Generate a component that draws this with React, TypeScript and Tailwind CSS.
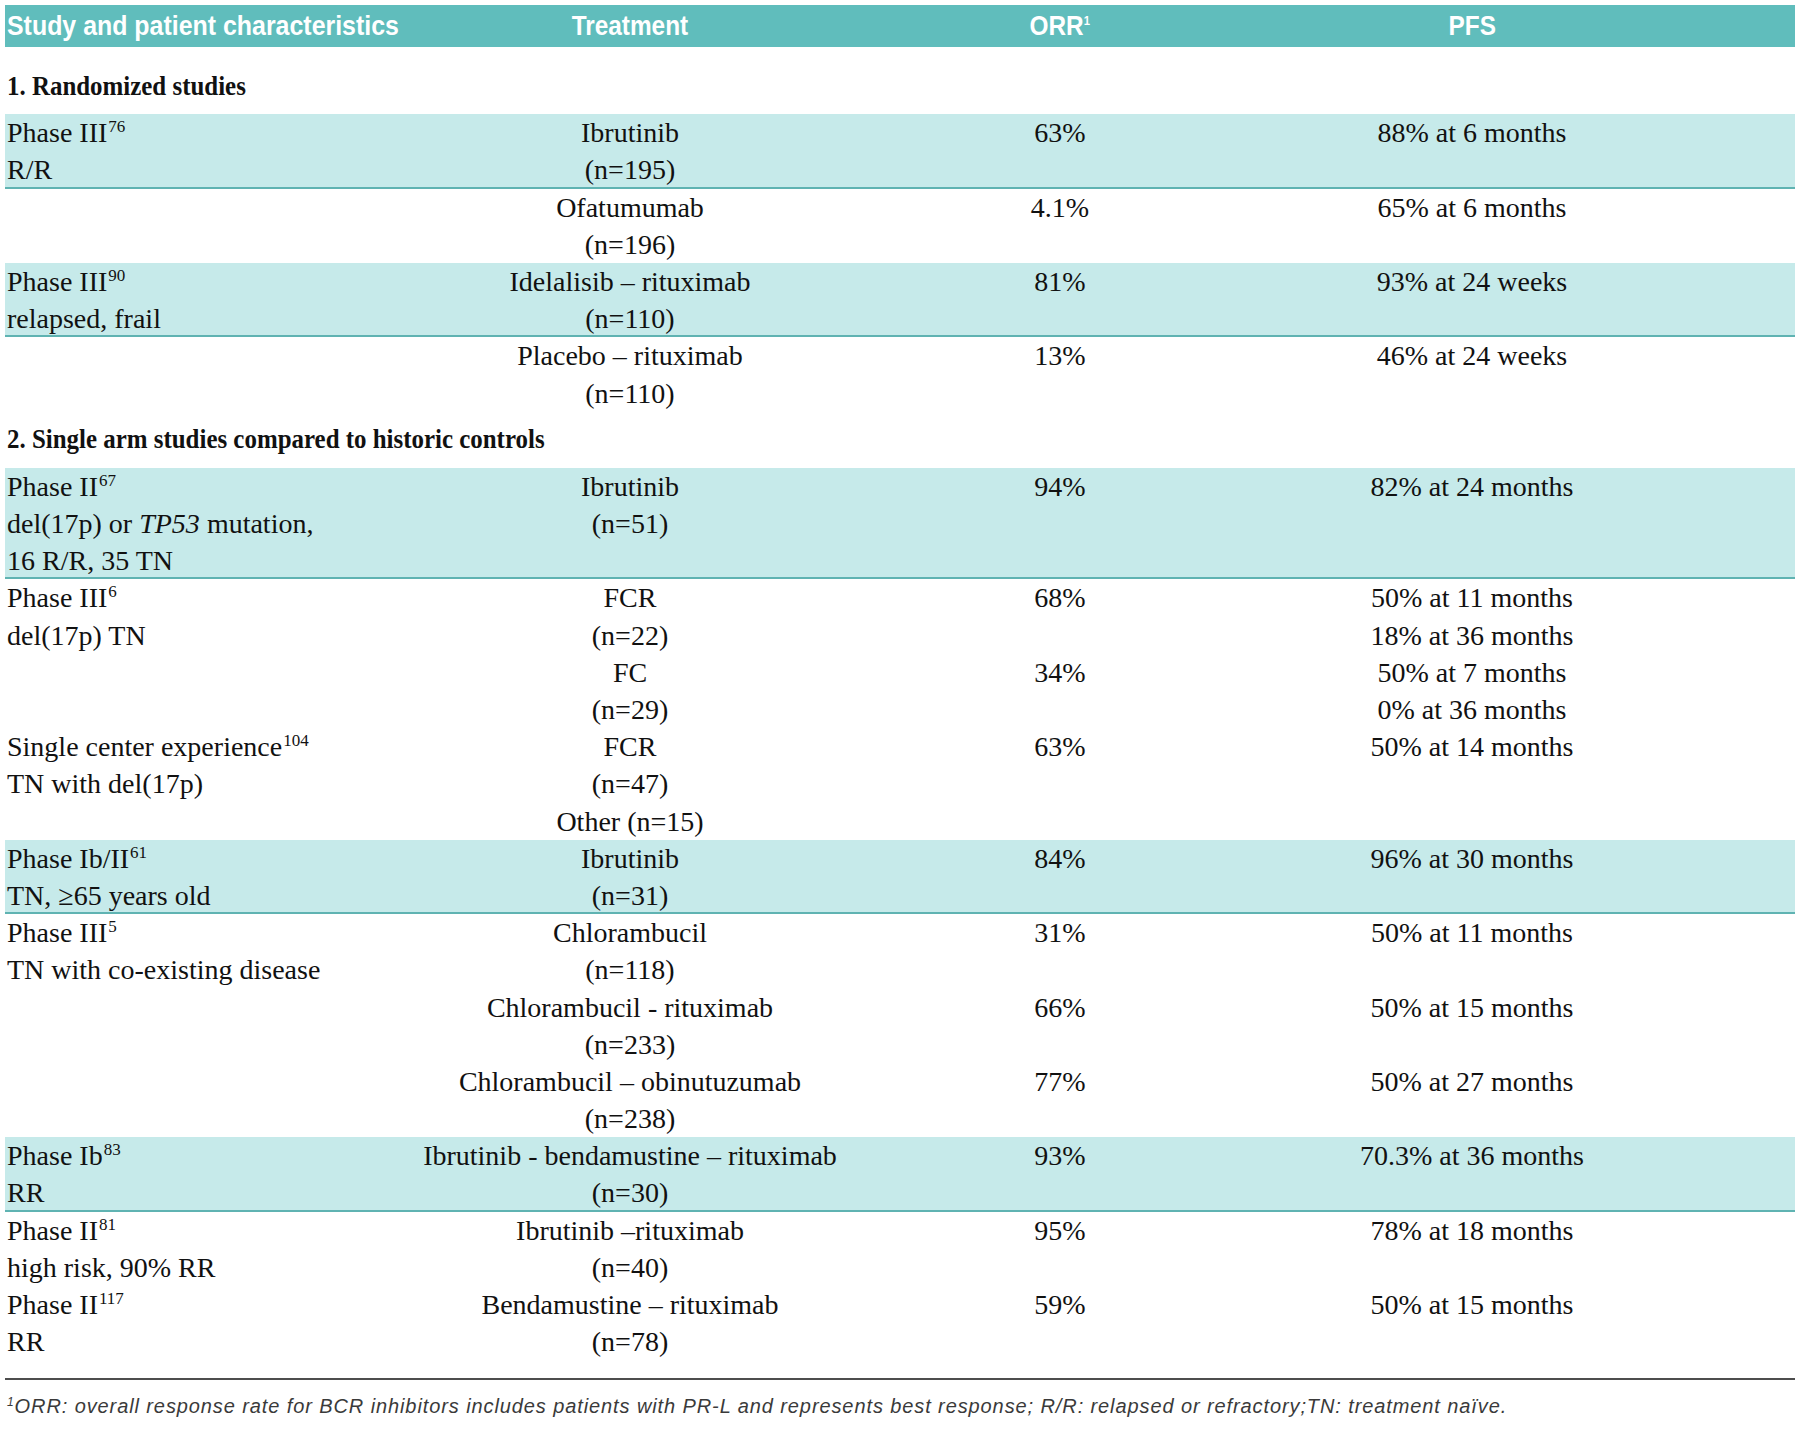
import React from 'react'

type Row = {
  teal?: boolean
  cols: React.ReactNode[][]
}

const Sup = ({ children }: { children: React.ReactNode }) => (
  <sup className="text-[17px] relative -top-[10px] ml-[1px]">{children}</sup>
)

const SECTION_1: Row[] = [
  {
    teal: true,
    cols: [
      [<>Phase III<Sup>76</Sup></>, 'R/R'],
      ['Ibrutinib', '(n=195)'],
      ['63%'],
      ['88% at 6 months'],
    ],
  },
  {
    cols: [[], ['Ofatumumab', '(n=196)'], ['4.1%'], ['65% at 6 months']],
  },
  {
    teal: true,
    cols: [
      [<>Phase III<Sup>90</Sup></>, 'relapsed, frail'],
      ['Idelalisib – rituximab', '(n=110)'],
      ['81%'],
      ['93% at 24 weeks'],
    ],
  },
  {
    cols: [[], ['Placebo – rituximab', '(n=110)'], ['13%'], ['46% at 24 weeks']],
  },
]

const SECTION_2: Row[] = [
  {
    teal: true,
    cols: [
      [<>Phase II<Sup>67</Sup></>, <>del(17p) or <i>TP53</i> mutation,</>, '16 R/R, 35 TN'],
      ['Ibrutinib', '(n=51)'],
      ['94%'],
      ['82% at 24 months'],
    ],
  },
  {
    cols: [
      [<>Phase III<Sup>6</Sup></>, 'del(17p) TN'],
      ['FCR', '(n=22)', 'FC', '(n=29)'],
      ['68%', '', '34%'],
      ['50% at 11 months', '18% at 36 months', '50% at 7 months', '0% at 36 months'],
    ],
  },
  {
    cols: [
      [<>Single center experience<Sup>104</Sup></>, 'TN with del(17p)'],
      ['FCR', '(n=47)', 'Other (n=15)'],
      ['63%'],
      ['50% at 14 months'],
    ],
  },
  {
    teal: true,
    cols: [
      [<>Phase Ib/II<Sup>61</Sup></>, 'TN, ≥65 years old'],
      ['Ibrutinib', '(n=31)'],
      ['84%'],
      ['96% at 30 months'],
    ],
  },
  {
    cols: [
      [<>Phase III<Sup>5</Sup></>, 'TN with co-existing disease'],
      ['Chlorambucil', '(n=118)', 'Chlorambucil - rituximab', '(n=233)', 'Chlorambucil – obinutuzumab', '(n=238)'],
      ['31%', '', '66%', '', '77%'],
      ['50% at 11 months', '', '50% at 15 months', '', '50% at 27 months'],
    ],
  },
  {
    teal: true,
    cols: [
      [<>Phase Ib<Sup>83</Sup></>, 'RR'],
      ['Ibrutinib - bendamustine – rituximab', '(n=30)'],
      ['93%'],
      ['70.3% at 36 months'],
    ],
  },
  {
    cols: [
      [<>Phase II<Sup>81</Sup></>, 'high risk, 90% RR'],
      ['Ibrutinib –rituximab', '(n=40)'],
      ['95%'],
      ['78% at 18 months'],
    ],
  },
  {
    cols: [
      [<>Phase II<Sup>117</Sup></>, 'RR'],
      ['Bendamustine – rituximab', '(n=78)'],
      ['59%'],
      ['50% at 15 months'],
    ],
  },
]

function TableRow({ row }: { row: Row }) {
  return (
    <div
      className={`grid grid-cols-[375px_500px_360px_464px_1fr] ${
        row.teal ? 'bg-[#c6eaea] shadow-[inset_0_-2px_0_#5fb3b2]' : ''
      }`}
    >
      {row.cols.map((lines, ci) => (
        <div key={ci} className={ci === 0 ? 'pl-[2px]' : 'text-center'}>
          {lines.map((line, li) => (
            <div key={li} className="h-[37.2px] leading-[37.2px] whitespace-nowrap">
              {line === '' ? '\u00a0' : line}
            </div>
          ))}
        </div>
      ))}
    </div>
  )
}

function SectionTitle({ children, className }: { children: React.ReactNode; className: string }) {
  return (
    <div className={`pl-[2px] leading-[37.2px] font-bold ${className}`}>
      <span className="inline-block whitespace-nowrap scale-x-[0.89] origin-left">{children}</span>
    </div>
  )
}

export default function App() {
  return (
    <div className="w-[1800px] h-[1430px] bg-white pt-[5px] pl-[5px] font-['Liberation_Serif','Times_New_Roman',serif] text-[28px] text-[#111]">
      <div className="w-[1790px]">
        {/* Header */}
        <div className="grid grid-cols-[375px_500px_360px_464px_1fr] h-[42px] bg-[#60bdbc] text-white font-['Liberation_Sans',Arial,sans-serif] font-bold leading-[42px]">
          <div className="pl-[2px]">
            <span className="inline-block whitespace-nowrap scale-x-[0.89] origin-left">
              Study and patient characteristics
            </span>
          </div>
          <div className="text-center">
            <span className="inline-block scale-x-[0.87]">Treatment</span>
          </div>
          <div className="text-center">
            <span className="inline-block scale-x-[0.87]">
              ORR<sup className="text-[13px] relative -top-[10px]">1</sup>
            </span>
          </div>
          <div className="text-center">
            <span className="inline-block scale-x-[0.87]">PFS</span>
          </div>
          <div />
        </div>

        <SectionTitle className="pt-[20px] pb-[10px]">1. Randomized studies</SectionTitle>
        {SECTION_1.map((row, i) => (
          <TableRow key={i} row={row} />
        ))}

        <SectionTitle className="pt-[8px] pb-[11px]">2. Single arm studies compared to historic controls</SectionTitle>
        {SECTION_2.map((row, i) => (
          <TableRow key={i} row={row} />
        ))}

        {/* Footnote */}
        <div className="mt-[18px] h-[2px] bg-[#4d4d4d]" />
        <p className="mt-[13px] pl-[2px] font-['Liberation_Sans',Arial,sans-serif] italic text-[20px] tracking-[0.9px] leading-[26px] text-[#3a3a3a] whitespace-nowrap">
          <sup className="text-[12px] relative -top-[7px]">1</sup>ORR: overall response rate for BCR inhibitors includes patients with PR-L and
          represents best response; R/R: relapsed or refractory;TN: treatment naïve.
        </p>
      </div>
    </div>
  )
}
